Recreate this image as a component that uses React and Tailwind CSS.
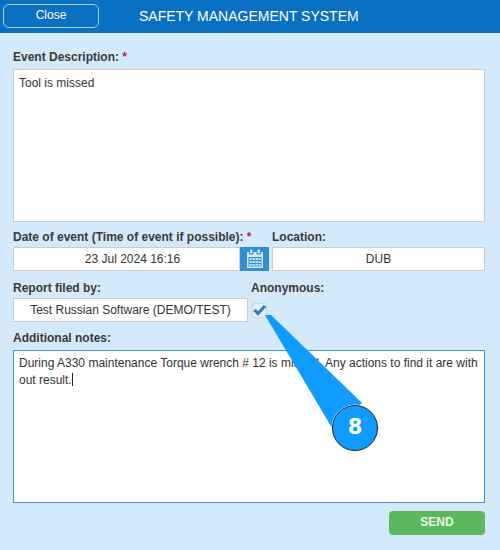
import React from "react";

const label = "block text-[12px] leading-[14px] font-bold text-[#3a3a3a] whitespace-nowrap";
const field = "h-[24px] bg-white border border-[#ccc] text-[12px] text-[#333] flex items-center justify-center";

const App = () => {
  return (
    <div className="relative w-[500px] h-[550px] overflow-hidden bg-[#d4eafb] font-['Liberation_Sans',Arial,sans-serif]">
      {/* top bar */}
      <div className="h-[33px] bg-[#0a70c2] flex items-center">
        <button className="ml-[3px] mb-[1px] w-[96px] h-[24px] rounded-[6px] border border-[#a9d2f0] text-white text-[12px] leading-[20px] pb-[2px]">
          Close
        </button>
        <div className="ml-[40px] text-white text-[14px]">SAFETY MANAGEMENT SYSTEM</div>
      </div>

      <div className="pl-[13px] pr-[15px] pt-[17px]">
        <div className={label}>
          Event Description: <span className="text-[#d0145a]">*</span>
        </div>
        <div className="mt-[5px] h-[153px] bg-white border border-[#ccc] px-[5px] py-[6px] text-[12px] leading-[15px] text-[#333]">
          Tool is missed
        </div>

        <div className="flex mt-[8px]">
          <div className="w-[227px]">
            <div className={label}>
              Date of event (Time of event if possible): <span className="text-[#d0145a]">*</span>
            </div>
            <div className={`${field} mt-[3px] pl-[12px]`}>23 Jul 2024 16:16</div>
          </div>
          <div className="mt-[17px] w-[29px] h-[24px] bg-[#2f8fd0] flex items-center justify-center">
            <svg width="20" height="20" viewBox="0 0 20 20" fill="#d4eafb">
              <rect x="5" y="0.5" width="2.5" height="4" rx="1" />
              <rect x="12.5" y="0.5" width="2.5" height="4" rx="1" />
              <path d="M2 3h2v2.5h4.5V3h3v2.5H16V3h2v16H2zM3.5 8v9.5h13V8z" />
              <path d="M4.5 9h2.2v2H4.5zM7.5 9h2.2v2H7.5zM10.5 9h2.2v2h-2.2zM13.5 9h2v2h-2zM4.5 12h2.2v2H4.5zM7.5 12h2.2v2H7.5zM10.5 12h2.2v2h-2.2zM13.5 12h2v2h-2zM4.5 15h2.2v1.7H4.5zM7.5 15h2.2v1.7H7.5zM10.5 15h2.2v1.7h-2.2zM13.5 15h2v1.7h-2z" />
            </svg>
          </div>
          <div className="ml-[3px] flex-1">
            <div className={label}>Location:</div>
            <div className={`${field} mt-[3px]`}>DUB</div>
          </div>
        </div>

        <div className="flex mt-[10px]">
          <div className="w-[235px]">
            <div className={label}>Report filed by:</div>
            <div className={`${field} mt-[3px]`}>Test Russian Software (DEMO/TEST)</div>
          </div>
          <div className="ml-[3px]">
            <div className={label}>Anonymous:</div>
            <div className="mt-[8px] ml-[1px] w-[15px] h-[15px] bg-[#e4edf5] border border-[#ccd6df] rounded-[2px] flex items-center justify-center">
              <svg width="15" height="13" viewBox="0 0 15 13" className="overflow-visible">
                <path d="M2.5 6l3.5 3.5L13 2" fill="none" stroke="#2f7cc4" strokeWidth="3.2" />
              </svg>
            </div>
          </div>
        </div>

        <div className={`${label} mt-[9px]`}>Additional notes:</div>
        <div className="mt-[5px] h-[153px] bg-white border border-[#3d97c9] px-[5px] py-[4px] text-[12px] leading-[17px] text-[#333]">
          During A330 maintenance Torque wrench # 12 is missed. Any actions to find it are with out result.
          <span className="inline-block w-px h-[13px] bg-[#222] align-[-2px]"></span>
        </div>

        <div className="flex justify-end mt-[8px]">
          <button className="w-[96px] h-[24px] rounded-[4px] bg-[#5cb85c] text-[#e8f8e0] text-[12px] font-bold pb-[3px]">
            SEND
          </button>
        </div>
      </div>

      {/* callout over the form */}
      <svg className="absolute left-0 top-0 pointer-events-none" width="500" height="550">
        <path d="M265 315L271 315L362 403L332 428Z" fill="#0f9bff" />
        <circle cx="355" cy="428" r="23" fill="#0f9bff" stroke="#fff" strokeWidth="1" />
        <circle cx="355" cy="428" r="22.5" fill="none" stroke="#222" strokeWidth="1" />
      </svg>
      <div className="absolute left-[332px] top-[405px] w-[46px] h-[46px] flex items-center justify-center text-white text-[21px] font-bold font-['DejaVu_Sans',sans-serif]">
        8
      </div>
    </div>
  );
};

export default App;
